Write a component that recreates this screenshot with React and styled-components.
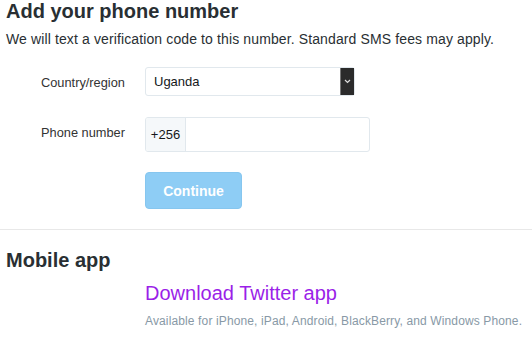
import React from "react";
import styled, { createGlobalStyle } from "styled-components";

const GlobalStyle = createGlobalStyle`
  body {
    margin: 0;
    background: #fff;
    font-family: "Liberation Sans", Arial, sans-serif;
    color: #292f33;
  }
`;

const Page = styled.div`
  width: 532px;
  height: 342px;
  overflow: hidden;
`;

const Section = styled.section`
  padding: 0 6px;
`;

const Title = styled.h2`
  margin: 0;
  font-size: 20px;
  line-height: 22px;
  font-weight: 700;
  color: #292f33;
`;

const Lead = styled.p`
  margin: 7px 0 0;
  font-size: 14px;
  line-height: 20px;
  letter-spacing: 0.12px;
  color: #292f33;
`;

const Form = styled.div`
  margin-top: 18px;
  display: flex;
  flex-direction: column;
  gap: 21px;
`;

const Row = styled.div`
  display: flex;
  align-items: flex-start;
  padding-left: 35px;
`;

const Label = styled.label`
  width: 104px;
  padding-top: 8px;
  font-size: 12.8px;
  line-height: 16px;
  color: #333;
`;

const SelectBox = styled.div`
  position: relative;
  box-sizing: border-box;
  width: 210px;
  height: 29px;
  border: 1px solid #e1e8ed;
  border-radius: 3px;
  display: flex;
  align-items: center;
  padding-left: 8px;
  font-size: 13px;
  color: #14171a;
`;

const Arrow = styled.span`
  position: absolute;
  top: 0;
  right: 0;
  width: 13px;
  height: 27px;
  background: #2b2b2b;
  border-left: 1px solid #777;
  display: flex;
  align-items: center;
  justify-content: center;
`;

const PhoneBox = styled.div`
  box-sizing: border-box;
  width: 225px;
  height: 35px;
  border: 1px solid #e1e8ed;
  border-radius: 3px;
  display: flex;
  overflow: hidden;
`;

const Prefix = styled.span`
  width: 39px;
  background: #f5f8fa;
  border-right: 1px solid #e1e8ed;
  display: flex;
  align-items: center;
  justify-content: center;
  font-size: 13px;
  color: #14171a;
`;

const Actions = styled.div`
  padding-left: 139px;
`;

const Button = styled.button`
  box-sizing: border-box;
  width: 97px;
  height: 37px;
  margin-top: -1px;
  border: 1px solid #86c6ef;
  border-radius: 4px;
  background: #8ecdf5;
  color: #fff;
  font-family: inherit;
  font-size: 14px;
  font-weight: 700;
  padding: 0;
`;

const Divider = styled.hr`
  margin: 20px 0 0;
  border: 0;
  border-top: 1px solid #e8e8e8;
  height: 0;
`;

const MobileSection = styled(Section)`
  padding-top: 19px;
`;

const AppLink = styled.a`
  display: block;
  margin: 10px 0 0 139px;
  font-size: 20px;
  line-height: 24px;
  color: #9b1fe8;
  text-decoration: none;
`;

const Note = styled.p`
  margin: 8px 0 0 139px;
  font-size: 12px;
  line-height: 16px;
  letter-spacing: 0.13px;
  color: #8899a6;
`;

export default function App() {
  return (
    <Page>
      <GlobalStyle />
      <Section>
        <Title>Add your phone number</Title>
        <Lead>We will text a verification code to this number. Standard SMS fees may apply.</Lead>
        <Form>
          <Row>
            <Label>Country/region</Label>
            <SelectBox>
              Uganda
              <Arrow>
                <svg width="7" height="5" viewBox="0 0 7 5">
                  <path d="M1 1 L3.5 3.5 L6 1" stroke="#ddd" strokeWidth="1.2" fill="none" />
                </svg>
              </Arrow>
            </SelectBox>
          </Row>
          <Row>
            <Label>Phone number</Label>
            <PhoneBox>
              <Prefix>+256</Prefix>
            </PhoneBox>
          </Row>
          <Actions>
            <Button>Continue</Button>
          </Actions>
        </Form>
      </Section>
      <Divider />
      <MobileSection>
        <Title>Mobile app</Title>
        <AppLink href="#">Download Twitter app</AppLink>
        <Note>Available for iPhone, iPad, Android, BlackBerry, and Windows Phone.</Note>
      </MobileSection>
    </Page>
  );
}
